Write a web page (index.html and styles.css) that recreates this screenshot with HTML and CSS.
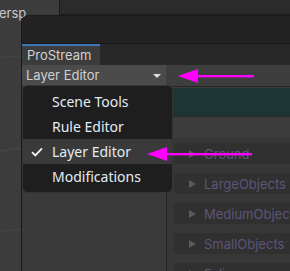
FILE: index.html
```html
<!DOCTYPE html>
<html>
<head>
<meta charset="utf-8">
<link rel="stylesheet" href="styles.css">
</head>
<body>
<div class="top">
  <div class="scene-label">ersp</div>
  <div class="topbar"></div>
</div>
<div class="main">
  <div class="gutter"></div>
  <div class="window">
    <div class="titlebar"></div>
    <div class="tabs"><div class="tab">ProStream</div></div>
    <div class="toolbar">
      <div class="dropdown"><span>Layer Editor</span><span class="caret"></span></div>
      <div class="toolbar-rest"></div>
    </div>
    <div class="content">
      <div class="left"></div>
      <div class="right">
        <div class="teal"></div>
        <div class="spacer"></div>
        <div class="list">
          <div class="row"><span class="tri"></span>Ground</div>
          <div class="row"><span class="tri"></span>LargeObjects</div>
          <div class="row"><span class="tri"></span>MediumObjects</div>
          <div class="row"><span class="tri"></span>SmallObjects</div>
          <div class="row"><span class="tri"></span>Foliage</div>
        </div>
      </div>
    </div>
    <div class="menu">
      <div class="item">Scene Tools</div>
      <div class="item">Rule Editor</div>
      <div class="item active"><svg class="check" width="12" height="10" viewBox="0 0 12 10"><path d="M1 5.2 L4.3 8.4 L11 1.4" fill="none" stroke="#f2f2f2" stroke-width="1.8"/></svg>Layer Editor</div>
      <div class="item">Modifications</div>
    </div>
  </div>
</div>
<svg class="arrow a1" width="80" height="16" viewBox="0 0 80 16"><polygon points="0,8 20,1 20,15" fill="#ff00ff"/><rect x="19" y="7" width="57" height="2.4" fill="#ff00ff"/></svg>
<svg class="arrow a2" width="110" height="16" viewBox="0 0 110 16"><polygon points="0,8 20,1 20,15" fill="#ff00ff"/><rect x="19" y="7" width="86" height="2.4" fill="#ff00ff"/></svg>
</body>
</html>
```
FILE: styles.css
```css
html, body {
  margin: 0;
  padding: 0;
}
body {
  width: 290px;
  height: 271px;
  overflow: hidden;
  position: relative;
  background-color: #3c3c3c;
  background-image:
    linear-gradient(172deg, transparent 48%, #474747 48.4%, transparent 49%),
    linear-gradient(100deg, transparent 30%, #464646 30.4%, transparent 31%),
    linear-gradient(178deg, transparent 20%, #444 20.3%, transparent 20.7%),
    linear-gradient(176deg, transparent 79%, #454545 79.3%, transparent 79.7%);
  font-family: Inter, "Noto Sans", sans-serif;
}
.top {
  display: flex;
  height: 15px;
}
.scene-label {
  width: 60px;
  color: #c9c9c9;
  font-size: 13px;
  line-height: 15px;
  padding-top: 6px;
  margin-left: -1px;
  box-sizing: border-box;
}
.topbar {
  flex: 1;
  background: #2b2b2b;
  border-left: 1px solid #1c1c1c;
  border-bottom: 1px solid #1d1d1d;
}
.main {
  display: flex;
  height: 256px;
}
.gutter {
  width: 21px;
  flex-shrink: 0;
}
.window {
  position: relative;
  flex: 1;
  min-width: 0;
  display: flex;
  flex-direction: column;
  background: #222;
  border-left: 1px solid #1a1a1a;
  border-top: 1px solid #1a1a1a;
  border-top-left-radius: 8px;
  overflow: hidden;
}
.titlebar {
  flex-shrink: 0;
  height: 27px;
  background: #222222;
  border-bottom: 1px solid #181818;
}
.tabs {
  flex-shrink: 0;
  height: 21px;
  background: #282828;
  display: flex;
}
.tab {
  width: 78px;
  background: #3c3c3c;
  border-top: 2px solid #3a76b6;
  color: #d2d2d2;
  font-size: 13px;
  line-height: 18px;
  padding-left: 5px;
  box-sizing: border-box;
}
.toolbar {
  flex-shrink: 0;
  height: 21px;
  display: flex;
  border-bottom: 1px solid #272727;
}
.dropdown {
  width: 144px;
  flex-shrink: 0;
  background: #4b4b4b;
  color: #d0d0d0;
  font-size: 13px;
  line-height: 21px;
  padding-left: 4px;
  padding-right: 4px;
  box-sizing: border-box;
  display: flex;
  justify-content: space-between;
  align-items: center;
}
.caret {
  width: 0;
  height: 0;
  border-left: 4px solid transparent;
  border-right: 4px solid transparent;
  border-top: 4px solid #e0e0e0;
  margin-right: 1px;
}
.toolbar-rest {
  flex: 1;
  background: #3e3e3e;
}
.content {
  flex: 1;
  min-height: 0;
  display: flex;
  overflow: hidden;
}
.left {
  width: 144px;
  flex-shrink: 0;
  background: #3a3a3a;
  border-right: 1px solid #252525;
}
.right {
  flex: 1;
  min-width: 0;
  background: #3c3c3c;
  display: flex;
  flex-direction: column;
}
.teal {
  flex-shrink: 0;
  height: 28px;
  margin-top: 1px;
  background: #1d3533;
  border-bottom: 1px solid #2a2a2a;
}
.spacer {
  flex-shrink: 0;
  height: 21px;
}
.list {
  flex: 1;
  background: #373737;
  padding: 5px 0 0 7px;
  display: flex;
  flex-direction: column;
  gap: 9px;
}
.row {
  flex-shrink: 0;
  height: 21px;
  background: #303030;
  border-radius: 3px 0 0 3px;
  display: flex;
  align-items: center;
  color: #5c5579;
  font-size: 13px;
  padding-left: 15px;
  white-space: nowrap;
}
.tri {
  width: 0;
  height: 0;
  border-top: 4.5px solid transparent;
  border-bottom: 4.5px solid transparent;
  border-left: 7px solid #5a5a5a;
  margin-right: 8px;
}
.menu {
  position: absolute;
  left: 0;
  top: 69px;
  width: 151px;
  height: 108px;
  box-sizing: border-box;
  background: #1e1e1e;
  border: 1px solid #343434;
  border-radius: 6px;
  padding-top: 3px;
  font-family: "Noto Sans", sans-serif;
}
.item {
  height: 25px;
  line-height: 25px;
  padding-left: 29px;
  color: #e4ecf4;
  font-size: 14px;
  position: relative;
  display: flex;
  align-items: center;
}
.item.active {
  background: #3a3a3a;
}
.check {
  position: absolute;
  left: 8px;
  top: 8px;
}
.arrow {
  position: absolute;
}
.a1 {
  left: 178px;
  top: 68px;
}
.a2 {
  left: 147px;
  top: 146px;
}
```
